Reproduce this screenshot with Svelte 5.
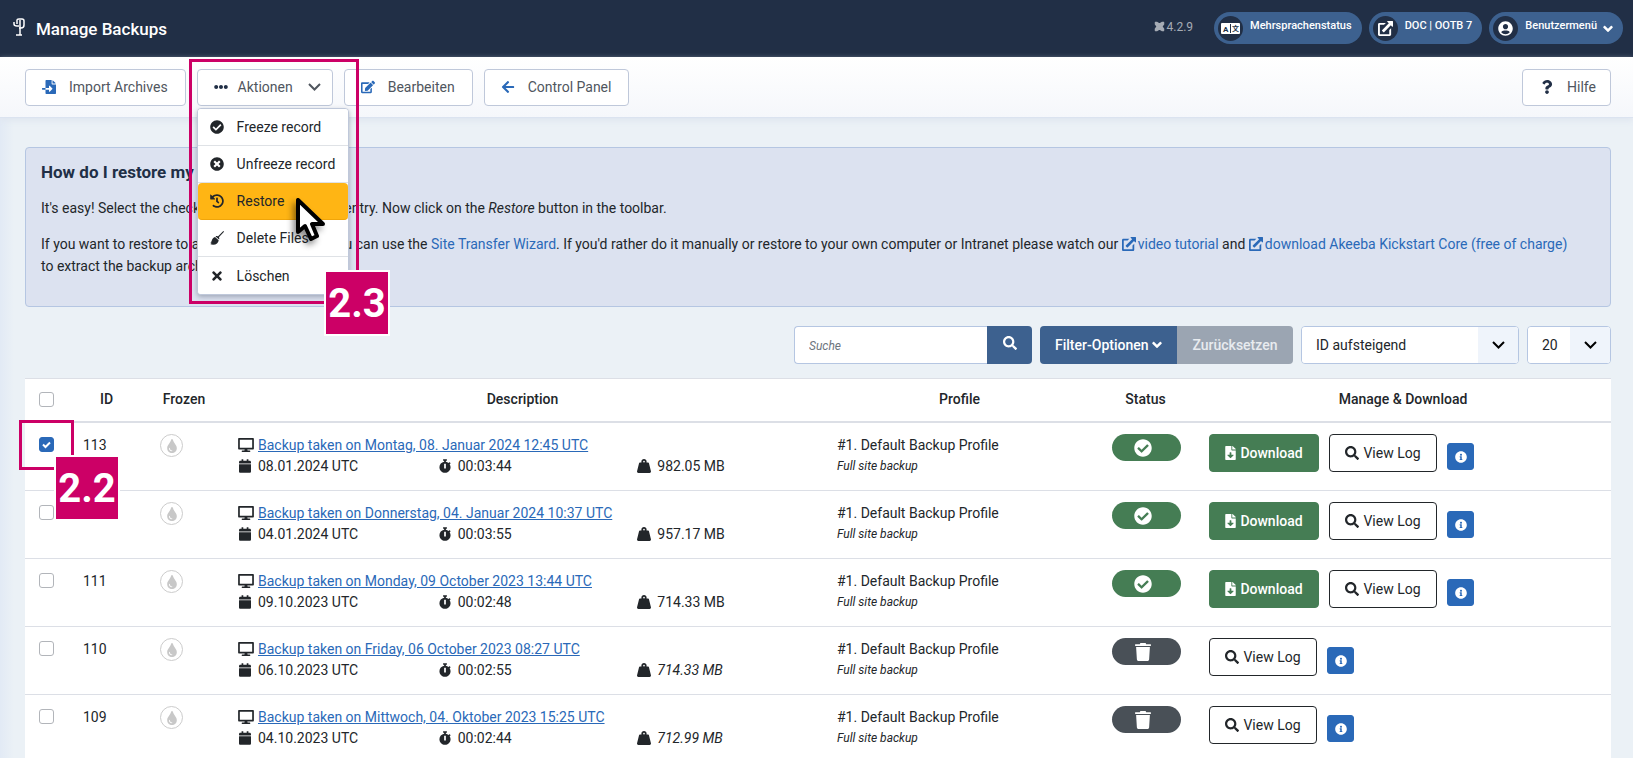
<script>
  // FontAwesome outlines, keyed by name: [viewBox width, path]
  const icons = {
    check: [512, 'M504 256c0 136.967-111.033 248-248 248S8 392.967 8 256 119.033 8 256 8s248 111.033 248 248zM227.314 387.314l184-184c6.248-6.248 6.248-16.379 0-22.627l-22.627-22.627c-6.248-6.249-16.379-6.249-22.628 0L216 308.118l-70.059-70.059c-6.248-6.248-16.379-6.248-22.628 0l-22.627 22.627c-6.248 6.248-6.248 16.379 0 22.627l104 104c6.249 6.249 16.379 6.249 22.628.001z'],
    timesCircle: [512, 'M256 8C119 8 8 119 8 256s111 248 248 248 248-111 248-248S393 8 256 8zm121.6 313.1c4.7 4.7 4.7 12.3 0 17L338 377.6c-4.7 4.7-12.3 4.7-17 0L256 312l-65.1 65.6c-4.7 4.7-12.3 4.7-17 0L134.4 338c-4.7-4.7-4.7-12.3 0-17l65.6-65-65.6-65.1c-4.7-4.7-4.7-12.3 0-17l39.6-39.6c4.7-4.7 12.3-4.7 17 0l65 65.7 65.1-65.6c4.7-4.7 12.3-4.7 17 0l39.6 39.6c4.7 4.7 4.7 12.3 0 17L312 256l65.6 65.1z'],
    history: [512, 'M504 255.531c.253 136.64-111.18 248.372-247.82 248.468-59.015.042-113.223-20.53-155.822-54.911-11.077-8.94-11.905-25.541-1.839-35.607l11.267-11.267c8.609-8.609 22.353-9.551 31.891-1.984C173.062 425.135 212.781 440 256 440c101.705 0 184-82.311 184-184 0-101.705-82.311-184-184-184-48.814 0-93.149 18.969-126.068 49.932l50.754 50.754c10.08 10.08 2.941 27.314-11.313 27.314H24c-8.837 0-16-7.163-16-16V38.627c0-14.254 17.234-21.393 27.314-11.314l49.372 49.372C129.209 34.136 189.552 8 256 8c136.81 0 247.747 110.78 248 247.531zm-180.912 78.784l9.823-12.63c8.138-10.463 6.253-25.542-4.21-33.679L288 256.349V152c0-13.255-10.745-24-24-24h-16c-13.255 0-24 10.745-24 24v135.651l65.409 50.874c10.463 8.137 25.541 6.253 33.679-4.21z'],
    brush: [512, 'M500 6c8 8 12 20 4 29L324 232c22 30 22 56 8 82l-128-112c28-22 58-18 84-4L478 6c7-6 15-6 22 0zM184 220l134 118c-10 100-90 168-206 166-40 0-76-10-104-26 30-8 46-24 52-44-16 6-32 8-46 4 60-30 40-190 170-218z'],
    times: [352, 'M242.72 256l100.07-100.07c12.28-12.28 12.28-32.19 0-44.48l-22.24-22.24c-12.28-12.28-32.19-12.28-44.48 0L176 189.28 75.93 89.21c-12.28-12.28-32.19-12.28-44.48 0L9.21 111.45c-12.28 12.28-12.28 32.19 0 44.48L109.28 256 9.21 356.07c-12.28 12.28-12.28 32.19 0 44.48l22.24 22.24c12.28 12.28 32.2 12.28 44.48 0L176 322.72l100.07 100.07c12.28 12.28 32.2 12.28 44.48 0l22.24-22.24c12.28-12.28 12.28-32.19 0-44.48L242.72 256z'],
    search: [512, 'M505 442.7L405.3 343c-4.5-4.5-10.6-7-17-7H372c27.6-35.3 44-79.7 44-128C416 93.1 322.9 0 208 0S0 93.1 0 208s93.1 208 208 208c48.3 0 92.7-16.4 128-44v16.3c0 6.4 2.5 12.5 7 17l99.7 99.7c9.4 9.4 24.6 9.4 33.9 0l28.3-28.3c9.4-9.4 9.4-24.6.1-34zM208 336c-70.7 0-128-57.2-128-128 0-70.7 57.2-128 128-128 70.7 0 128 57.2 128 128 0 70.7-57.2 128-128 128z'],
    info: [512, 'M256 8C119.043 8 8 119.083 8 256c0 136.997 111.043 248 248 248s248-111.003 248-248C504 119.083 392.957 8 256 8zm0 110c23.196 0 42 18.804 42 42s-18.804 42-42 42-42-18.804-42-42 18.804-42 42-42zm56 254c0 6.627-5.373 12-12 12h-88c-6.627 0-12-5.373-12-12v-24c0-6.627 5.373-12 12-12h12v-64h-12c-6.627 0-12-5.373-12-12v-24c0-6.627 5.373-12 12-12h64c6.627 0 12 5.373 12 12v100h12c6.627 0 12 5.373 12 12v24z'],
    dots: [512, 'M328 256c0 39.8-32.2 72-72 72s-72-32.2-72-72 32.2-72 72-72 72 32.2 72 72zm104-72c-39.8 0-72 32.2-72 72s32.2 72 72 72 72-32.2 72-72-32.2-72-72-72zm-352 0c-39.8 0-72 32.2-72 72s32.2 72 72 72 72-32.2 72-72-32.2-72-72-72z'],
    tint: [352, 'M205.22 22.09c-7.94-28.78-49.44-30.12-58.44 0C100.01 179.85 0 222.72 0 333.91 0 432.35 78.72 512 176 512s176-79.65 176-178.09c0-111.75-99.79-153.34-146.78-311.82zM176 448c-61.75 0-112-50.25-112-112 0-8.84 7.16-16 16-16s16 7.16 16 16c0 44.11 35.89 80 80 80 8.84 0 16 7.16 16 16s-7.16 16-16 16z'],
    edit: [576, 'M402.6 83.2l90.2 90.2c3.8 3.8 3.8 10 0 13.8L274.4 405.6l-92.8 10.3c-12.4 1.4-22.9-9.1-21.5-21.5l10.3-92.8L388.8 83.2c3.8-3.8 10-3.8 13.8 0zm162-22.9l-48.8-48.8c-15.2-15.2-39.9-15.2-55.2 0l-35.4 35.4c-3.8 3.8-3.8 10 0 13.8l90.2 90.2c3.8 3.8 10 3.8 13.8 0l35.4-35.4c15.2-15.3 15.2-40 0-55.2zM384 346.2V448H64V128h229.8c3.2 0 6.2-1.3 8.5-3.5l40-40c7.6-7.6 2.2-20.5-8.5-20.5H48C21.5 64 0 85.5 0 112v352c0 26.5 21.5 48 48 48h352c26.5 0 48-21.5 48-48V306.2c0-10.7-12.9-16-20.5-8.5l-40 40c-2.2 2.3-3.5 5.3-3.5 8.5z'],
    left: [448, 'M257.5 445.1l-22.2 22.2c-9.4 9.4-24.6 9.4-33.9 0L7 273c-9.4-9.4-9.4-24.6 0-33.9L201.4 44.7c9.4-9.4 24.6-9.4 33.9 0l22.2 22.2c9.5 9.5 9.3 25-.4 34.3L136.6 216H424c13.3 0 24 10.7 24 24v32c0 13.3-10.7 24-24 24H136.6l120.5 114.8c9.8 9.3 10 24.8.4 34.3z'],
    external: [512, 'M330 0h166c9 0 16 7 16 16v166c0 15-18 22-28 12l-46-46-232 232c-6 6-16 6-22 0l-46-46c-6-6-6-16 0-22L370 80l-52-52c-10-10-3-28 12-28zM48 64h220l-64 64H64v320h320V310l64-64v218c0 27-21 48-48 48H48c-27 0-48-21-48-48V112c0-27 21-48 48-48z'],
    user: [496, 'M248 8C111 8 0 119 0 256s111 248 248 248 248-111 248-248S385 8 248 8zm0 96c48.6 0 88 39.4 88 88s-39.4 88-88 88-88-39.4-88-88 39.4-88 88-88zm0 344c-58.7 0-111.3-26.6-146.5-68.2 18.8-35.4 55.6-59.8 98.5-59.8 2.4 0 4.8.4 7.1 1.1 13 4.2 26.6 6.9 40.9 6.9 14.3 0 28-2.7 40.9-6.9 2.3-.7 4.7-1.1 7.1-1.1 42.9 0 79.7 24.4 98.5 59.8C359.3 421.4 306.7 448 248 448z'],
    down: [448, 'M200 410L10 220c-14-14-14-36 0-50l34-34c14-14 36-14 50 0l130 130 130-130c14-14 36-14 50 0l34 34c14 14 14 36 0 50L248 410c-14 14-34 14-48 0z'],
    calendar: [448, 'M12 192h424c6.6 0 12 5.4 12 12v260c0 26.5-21.5 48-48 48H48c-26.5 0-48-21.5-48-48V204c0-6.6 5.4-12 12-12zm436-44v-36c0-26.5-21.5-48-48-48h-48V12c0-6.6-5.4-12-12-12h-40c-6.6 0-12 5.4-12 12v52H160V12c0-6.6-5.4-12-12-12h-40c-6.6 0-12 5.4-12 12v52H48C21.5 64 0 85.5 0 112v36c0 6.6 5.4 12 12 12h424c6.6 0 12-5.4 12-12z'],
    desktop: [576, 'M540 0H36C16 0 0 16 0 36v344c0 20 16 36 36 36h204l-10 42h-76c-14 0-26 12-26 27s12 27 26 27h268c14 0 26-12 26-27s-12-27-26-27h-76l-10-42h204c20 0 36-16 36-36V36c0-20-16-36-36-36zm-26 352H62V60h452v292z'],
    stopwatch: [448, 'M432 304c0 114.900-93.100 208-208 208S16 418.900 16 304c0-104 76.300-190.200 176-205.500V64h-28c-6.600 0-12-5.400-12-12V12c0-6.600 5.400-12 12-12h120c6.600 0 12 5.400 12 12v40c0 6.600-5.400 12-12 12h-28v34.500c37.500 5.800 71.700 21.600 99.700 44.600l27.500-27.500c4.700-4.700 12.300-4.700 17 0l28.300 28.300c4.700 4.700 4.700 12.300 0 17l-30 30C419.700 223.300 432 262.200 432 304zm-176 36V188.500c0-6.600-5.400-12-12-12h-40c-6.600 0-12 5.400-12 12V340c0 6.600 5.400 12 12 12h40c6.600 0 12-5.400 12-12z'],
    weight: [512, 'M510.280 445.860l-73.030-292.130c-3.800-15.190-16.440-25.720-30.870-25.720h-60.250c3.570-10.050 5.880-20.720 5.880-32 0-53.020-42.980-96-96-96s-96 42.980-96 96c0 11.280 2.300 21.950 5.880 32h-60.250c-14.430 0-27.080 10.540-30.870 25.720L1.720 445.860C-6.610 479.170 16.380 512 48.030 512h415.950c31.640 0 54.630-32.830 46.300-66.140zM256 128c-17.640 0-32-14.360-32-32s14.360-32 32-32 32 14.360 32 32-14.360 32-32 32z'],
    question: [384, 'M202.021 0C122.202 0 70.503 32.703 29.914 91.026c-7.363 10.58-5.093 25.086 5.178 32.874l43.138 32.709c10.373 7.865 25.132 6.026 33.253-4.148 25.049-31.381 43.63-49.449 82.757-49.449 30.764 0 68.816 19.799 68.816 49.631 0 22.552-18.617 34.134-48.993 51.164-35.423 19.86-82.299 44.576-82.299 106.405V320c0 13.255 10.745 24 24 24h72.471c13.255 0 24-10.745 24-24v-5.773c0-42.86 125.268-44.645 125.268-160.627C377.504 66.256 286.902 0 202.021 0zM192 373.459c-38.196 0-69.271 31.075-69.271 69.271 0 38.195 31.075 69.27 69.271 69.27s69.271-31.075 69.271-69.271-31.075-69.27-69.271-69.27z'],
    import: [512, 'M16 288c-9 0-16 7-16 16v32c0 9 7 16 16 16h112v-64H16zM489 105L407 23c-4-4-11-7-17-7h-6v112h112v-6c0-6-3-13-7-17zM352 136V0H152c-13 0-24 11-24 24v264h128v-65c0-14 17-21 27-11l96 97c7 6 7 17 0 23l-96 97c-10 10-27 3-27-11v-66H128v136c0 13 11 24 24 24h336c13 0 24-11 24-24V160H376c-13 0-24-11-24-24z'],
    file: [384, 'M224 136V0H24C11 0 0 11 0 24v464c0 13 11 24 24 24h336c13 0 24-11 24-24V160H248c-13 0-24-11-24-24zm76 211L203 443c-6 7-17 7-23 0l-96-96c-10-10-3-27 11-27h65v-80c0-9 7-16 16-16h32c9 0 16 7 16 16v80h65c14 0 21 17 11 27zM377 105L279 7c-4-4-11-7-17-7h-6v128h128v-6c0-6-3-13-7-17z'],
    trash: [448, 'M150 0h148l16 32h122c7 0 12 5 12 12v40H0V44c0-7 5-12 12-12h122zM28 112h392l-22 356c-2 25-22 44-48 44H98c-26 0-46-19-48-44z']
  };

  let menuOpen = true;
  let search = '';

  const actions = [
    { icon: 'check', label: 'Freeze record' },
    { icon: 'timesCircle', label: 'Unfreeze record' },
    { icon: 'history', label: 'Restore', active: true },
    { icon: 'brush', label: 'Delete Files' },
    { icon: 'times', label: 'Löschen' }
  ];

  let backups = [
    { id: 113, title: 'Backup taken on Montag, 08. Januar 2024 12:45 UTC', date: '08.01.2024 UTC', time: '00:03:44', size: '982.05 MB', stored: true, checked: true },
    { id: 112, title: 'Backup taken on Donnerstag, 04. Januar 2024 10:37 UTC', date: '04.01.2024 UTC', time: '00:03:55', size: '957.17 MB', stored: true, checked: false },
    { id: 111, title: 'Backup taken on Monday, 09 October 2023 13:44 UTC', date: '09.10.2023 UTC', time: '00:02:48', size: '714.33 MB', stored: true, checked: false },
    { id: 110, title: 'Backup taken on Friday, 06 October 2023 08:27 UTC', date: '06.10.2023 UTC', time: '00:02:55', size: '714.33 MB', stored: false, checked: false },
    { id: 109, title: 'Backup taken on Mittwoch, 04. Oktober 2023 15:25 UTC', date: '04.10.2023 UTC', time: '00:02:44', size: '712.99 MB', stored: false, checked: false }
  ];

  function toggleAll(event) {
    backups = backups.map(backup => ({ ...backup, checked: event.target.checked }));
  }
</script>

{#snippet icon(name, size = 14)}
  <svg class="icon" height={size} width={Math.round((size * icons[name][0]) / 512)} viewBox="0 0 {icons[name][0]} 512" aria-hidden="true"><path d={icons[name][1]} /></svg>
{/snippet}

<div class="page">
  <header>
    <svg class="logo" width="12" height="18" viewBox="0 0 12 18" aria-hidden="true">
      <path d="M1 4v2q0 2 3 2h2M4 6V2q0-1 2-1h3q2 0 2 2v4q0 3-3 3H6M7 2v15M3 17h6" />
    </svg>
    <h1>Manage Backups</h1>
    <div class="status-bar">
      <span class="version">
        <svg width="11" height="11" viewBox="0 0 10 10" aria-hidden="true"><path d="M1 1l8 8M9 1L1 9M2 1l3 2 3-2M2 9l3-2 3 2M1 2l2 3-2 3M9 2L7 5l2 3" /></svg>
        4.2.9
      </span>
      <a class="pill" href="#sprachen">
        <span class="disc">
          <svg width="19" height="11" viewBox="0 0 19 11" aria-hidden="true">
            <rect width="19" height="11" rx="1" fill="#fff" />
            <path d="M9.500 1v9" stroke="#212f46" />
            <text x="2" y="9" font-size="8" font-weight="700" fill="#212f46">A</text>
            <text x="11" y="8" font-size="7" font-weight="700" fill="#212f46">文</text>
          </svg>
        </span>
        <span class="pill-text">Mehrsprachenstatus</span>
      </a>
      <a class="pill" href="#site">
        <span class="disc">{@render icon('external', 15)}</span>
        <span class="pill-text">DOC | OOTB 7</span>
      </a>
      <button class="pill" type="button">
        <span class="disc">{@render icon('user', 15)}</span>
        <span class="pill-text">Benutzermenü</span>
        {@render icon('down', 11)}
      </button>
    </div>
  </header>

  <div class="toolbar">
    <button class="tool" type="button">{@render icon('import')}Import Archives</button>
    <div class="dropdown">
      <button class="tool dark" type="button" aria-expanded={menuOpen} on:click={() => (menuOpen = !menuOpen)}>
        {@render icon('dots')}Aktionen
        <svg class="caret" width="13" height="8" viewBox="0 0 13 8" aria-hidden="true"><path d="M1 1l5.500 5.500L12 1" /></svg>
      </button>
      {#if menuOpen}
        <div class="menu">
          {#each actions as action}
            <button class="menu-item" class:active={action.active} type="button">
              <span class="menu-icon">{@render icon(action.icon)}</span>{action.label}
            </button>
          {/each}
        </div>
      {/if}
    </div>
    <button class="tool" type="button">{@render icon('edit')}Bearbeiten</button>
    <button class="tool" type="button">{@render icon('left')}Control Panel</button>
    <button class="tool dark help" type="button">{@render icon('question')}Hilfe</button>
  </div>

  <main>
    <section class="alert">
      <h2>How do I restore my backups?</h2>
      <p>It's easy! Select the checkbox next to the backup entry. Now click on the <em>Restore</em> button in the toolbar.</p>
      <p>
        If you want to restore to a different web server you can use the <a href="#wizard">Site Transfer Wizard</a>. If you'd rather do it manually or restore to your own computer or Intranet please watch our
        <a href="#video">{@render icon('external')}video tutorial</a> and
        <a href="#kickstart">{@render icon('external')}download Akeeba Kickstart Core (free of charge)</a>
        to&nbsp;extract the backup archive.
      </p>
    </section>

    <form class="filters">
      <div class="group">
        <input class="search" type="text" placeholder="Suche" aria-label="Suche" bind:value={search} />
        <button class="search-btn" type="button" aria-label="Suchen">{@render icon('search')}</button>
      </div>
      <div class="group">
        <button class="filter-btn" type="button">Filter-Optionen {@render icon('down', 11)}</button>
        <button class="clear-btn" type="button">Zurücksetzen</button>
      </div>
      <div class="select">
        <select class="order" aria-label="Sortierung">
          <option>ID aufsteigend</option>
          <option>ID absteigend</option>
        </select>
        <span class="arrow"><svg class="caret" width="13" height="8" viewBox="0 0 13 8" aria-hidden="true"><path d="M1 1l5.500 5.500L12 1" /></svg></span>
      </div>
      <div class="select">
        <select class="limit" aria-label="Anzahl">
          <option>20</option>
          <option>50</option>
        </select>
        <span class="arrow"><svg class="caret" width="13" height="8" viewBox="0 0 13 8" aria-hidden="true"><path d="M1 1l5.500 5.500L12 1" /></svg></span>
      </div>
    </form>

    <table>
      <thead>
        <tr>
          <th class="c-check"><input type="checkbox" aria-label="Alle auswählen" on:change={toggleAll} /></th>
          <th class="c-id">ID</th>
          <th class="c-frozen">Frozen</th>
          <th>Description</th>
          <th class="c-profile">Profile</th>
          <th class="c-status">Status</th>
          <th class="c-manage">Manage &amp; Download</th>
        </tr>
      </thead>
      <tbody>
        {#each backups as backup}
          <tr>
            <td class="c-check"><input type="checkbox" aria-label="Backup {backup.id}" bind:checked={backup.checked} /></td>
            <td>{backup.id}</td>
            <td><span class="frozen">{@render icon('tint')}</span></td>
            <td class="desc">
              <div class="line">
                <span class="slot">{@render icon('desktop')}</span>
                <a href="#backup-{backup.id}">{backup.title}</a>
              </div>
              <div class="meta">
                <div class="line"><span class="slot small">{@render icon('calendar')}</span>{backup.date}</div>
                <div class="line"><span class="slot small">{@render icon('stopwatch')}</span>{backup.time}</div>
                <div class="line"><span class="slot small">{@render icon('weight')}</span><span class:gone={!backup.stored}>{backup.size}</span></div>
              </div>
            </td>
            <td>
              <div class="line">#1. Default Backup Profile</div>
              <div class="line type">Full site backup</div>
            </td>
            <td>
              <span class="badge" class:obsolete={!backup.stored}>{@render icon(backup.stored ? 'check' : 'trash', 18)}</span>
            </td>
            <td>
              <div class="buttons">
                {#if backup.stored}
                  <button class="download" type="button">{@render icon('file')}Download</button>
                {/if}
                <button class="log" type="button">{@render icon('search')}View Log</button>
                <button class="info" type="button" aria-label="Info">{@render icon('info', 12)}</button>
              </div>
            </td>
          </tr>
        {/each}
      </tbody>
    </table>
  </main>

  <!-- step markers of the guide, laid over the page -->
  <div class="frame frame-menu"></div>
  <div class="frame frame-check"></div>
  <div class="step step-menu">2.3</div>
  <div class="step step-check">2.2</div>
  <svg class="cursor" width="40" height="54" viewBox="0 0 40 54" aria-hidden="true">
    <path d="M10 6v32l7-6 6 13 6-3-5-12h11z" />
  </svg>
</div>

<style>
  :global(body) {
    margin: 0;
    overflow: hidden;
  }

  .page {
    position: relative;
    min-height: 100vh;
    background: linear-gradient(90deg, #e2eaf5, #ebf1f6 14px);
    color: #22262a;
    font-family: Roboto, 'Noto Sans CJK SC', sans-serif;
    font-size: 14px;
    line-height: 22px;
  }

  button, input, select {
    font: inherit;
    color: inherit;
    margin: 0;
    box-sizing: border-box;
  }

  button {
    cursor: pointer;
  }

  .icon {
    fill: currentColor;
    flex: none;
  }

  .caret {
    fill: none;
    stroke: currentColor;
    stroke-width: 2;
  }

  a {
    color: #2a69b8;
    text-decoration: none;
  }

  header {
    display: flex;
    align-items: center;
    height: 57px;
    padding: 0 10px 0 13px;
    background: #212f46;
    color: #fff;
    box-sizing: border-box;
  }

  .logo {
    fill: none;
    stroke: #fff;
    stroke-width: 1.500;
    margin: 0 11px 4px 0;
  }

  h1 {
    margin: 0;
    font-size: 17px;
    font-weight: 500;
  }

  .status-bar {
    display: flex;
    align-items: center;
    gap: 7px;
    margin-left: auto;
    padding-bottom: 1px;
    font-size: 11px;
  }

  .version {
    display: flex;
    align-items: center;
    gap: 2px;
    margin-right: 14px;
    padding-bottom: 3px;
    color: #a6acb5;
    font-size: 12px;
  }

  .version svg {
    fill: none;
    stroke: #a6acb5;
    stroke-width: 1.500;
  }

  .pill {
    display: flex;
    align-items: center;
    height: 32px;
    padding: 0 10px 0 4px;
    border: 0;
    border-radius: 16px;
    background: #3d618f;
    color: #fff;
    font-weight: 500;
  }

  .pill-text {
    padding-bottom: 4px;
  }

  .pill .icon {
    margin-left: 6px;
  }

  .pill .disc .icon {
    margin: 0;
  }

  .disc {
    display: flex;
    align-items: center;
    justify-content: center;
    width: 25px;
    height: 25px;
    margin-right: 7px;
    border-radius: 50%;
    background: #212f46;
  }

  .toolbar {
    display: flex;
    gap: 11px;
    padding: 12px 22px 11px 25px;
    border-bottom: 1px solid #dbe3f0;
    background: linear-gradient(#fff, #f5f7fb);
    box-shadow: 0 3px 6px #dfe6f0;
  }

  .tool {
    display: flex;
    align-items: center;
    gap: 13px;
    height: 37px;
    padding: 0 17px 2px 16px;
    border: 1px solid #bfc8da;
    border-radius: 4px;
    background: #fff;
    color: #50565e;
  }

  .tool .icon {
    color: #2a69b8;
    width: 14px;
  }

  .dark .icon {
    color: #212f46;
  }

  .dark {
    padding: 0 11px 2px 16px;
    gap: 10px;
  }

  .help {
    margin-left: auto;
    padding: 0 14px 2px 17px;
    gap: 13px;
  }

  .tool .caret {
    margin-left: 5px;
  }

  .dropdown {
    position: relative;
  }

  .menu {
    position: absolute;
    z-index: 1;
    top: 39px;
    left: 0;
    width: 152px;
    border: 1px solid #bfc8da;
    border-radius: 4px;
    background: #fff;
    box-shadow: 0 2px 5px rgba(50, 60, 80, 0.35);
    overflow: hidden;
    box-sizing: border-box;
  }

  .menu-item {
    display: flex;
    align-items: center;
    gap: 11px;
    width: 100%;
    height: 37px;
    padding: 0 0 0 10px;
    border: 0;
    border-bottom: 1px solid #dfe2e6;
    background: #fff;
    white-space: nowrap;
  }

  .menu-item:last-child {
    border-bottom: 0;
  }

  .menu-item.active {
    border-color: #f0a50a;
    border-radius: 4px;
    background: #ffb514;
  }

  .menu-icon {
    display: flex;
    justify-content: center;
    width: 18px;
  }

  main {
    padding: 29px 22px 0 25px;
  }

  .alert {
    min-height: 160px;
    padding: 13px 15px;
    border: 1px solid #b5c6e2;
    border-radius: 4px;
    background: #dce2f0;
    box-sizing: border-box;
  }

  h2 {
    margin: 0 0 14px;
    font-size: 17px;
    line-height: 22px;
    font-weight: 700;
    color: #212f46;
  }

  .alert p {
    margin: 0 0 14px;
  }

  .alert .icon {
    margin-right: 2px;
    vertical-align: -2px;
  }

  .filters {
    display: flex;
    justify-content: flex-end;
    gap: 8px;
    margin: 19px 0 14px;
  }

  .group {
    display: flex;
  }

  .filters button {
    height: 38px;
    border: 0;
    background: #3d618f;
    color: #fff;
    font-weight: 500;
  }

  .search {
    width: 193px;
    height: 38px;
    padding: 0 14px;
    border: 1px solid #b5c6e2;
    border-right: 0;
    border-radius: 4px 0 0 4px;
    background: #fff;
  }

  .search::placeholder {
    color: #6d757e;
    font-size: 12px;
    font-style: italic;
  }

  .search-btn {
    width: 45px;
    border-radius: 0 4px 4px 0;
  }

  .filter-btn {
    width: 137px;
    padding: 0;
    border-radius: 4px 0 0 4px;
  }

  .filters .clear-btn {
    width: 116px;
    padding: 0;
    border-radius: 0 4px 4px 0;
    background: #9ba5b2;
    color: #e8ebef;
  }

  .select {
    display: grid;
    border: 1px solid #b5c6e2;
    border-radius: 4px;
    background: #fff;
    overflow: hidden;
  }

  .select select, .arrow {
    grid-area: 1 / 1;
  }

  .select select {
    appearance: none;
    height: 36px;
    padding: 0 14px;
    border: 0;
    background: #fff;
  }

  .order {
    width: 216px;
  }

  .limit {
    width: 82px;
  }

  .arrow {
    display: flex;
    align-items: center;
    justify-content: center;
    justify-self: end;
    width: 40px;
    background: #eff4fb;
    color: #000;
    pointer-events: none;
  }

  table {
    width: 100%;
    border-collapse: separate;
    border-spacing: 0;
    table-layout: fixed;
    border-top: 1px solid #dcdfe6;
    background: #fff;
  }

  th {
    height: 40px;
    padding: 0 15px 2px 17px;
    border-bottom: 2px solid #dcdfe6;
    font-weight: 500;
    box-sizing: content-box;
  }

  td {
    height: 56px;
    padding: 11px 16px 0;
    border-bottom: 1px solid #dcdfe6;
    vertical-align: top;
    box-sizing: content-box;
  }

  th.c-check, td.c-check {
    width: 16px;
    padding-left: 14px;
    padding-right: 12px;
    text-align: left;
  }

  .c-id {
    width: 45px;
  }

  .c-frozen {
    width: 46px;
  }

  .c-profile {
    width: 243px;
  }

  .c-status {
    width: 65px;
  }

  .c-manage {
    width: 386px;
  }

  input[type='checkbox'] {
    appearance: none;
    display: block;
    width: 15px;
    height: 15px;
    border: 1px solid #b2b5ba;
    border-radius: 3px;
    background: #fff;
  }

  td input[type='checkbox'] {
    margin-top: 3px;
  }

  input[type='checkbox']:checked {
    border-color: #2a69b8;
    background: #2a69b8 url("data:image/svg+xml,%3Csvg xmlns='http://www.w3.org/2000/svg' viewBox='0 0 13 13'%3E%3Cpath d='M3 6.500l2.500 2.500L10 4.500' fill='none' stroke='white' stroke-width='2'/%3E%3C/svg%3E") center / 13px no-repeat;
  }

  .frozen {
    display: flex;
    align-items: center;
    justify-content: center;
    width: 23px;
    height: 23px;
    border: 1px solid #ccc;
    border-radius: 50%;
    color: #c8c8c8;
    box-sizing: border-box;
  }

  .line {
    display: flex;
    align-items: center;
    height: 21px;
    white-space: nowrap;
  }

  .slot {
    display: flex;
    justify-content: center;
    width: 16px;
    margin-right: 4px;
  }

  .slot.small {
    width: 14px;
    margin-right: 6px;
  }

  .desc a {
    text-decoration: underline;
  }

  .meta {
    display: grid;
    grid-template-columns: repeat(3, 1fr);
    margin-right: -32px;
  }

  .gone {
    font-style: italic;
  }

  .type {
    font-size: 12px;
    font-style: italic;
  }

  .badge {
    display: flex;
    align-items: center;
    justify-content: center;
    width: 69px;
    height: 27px;
    padding-right: 7px;
    border-radius: 14px;
    background: #457d54;
    color: #fff;
    box-sizing: border-box;
  }

  .badge.obsolete {
    background: #495057;
  }

  .buttons {
    display: flex;
    gap: 10px;
  }

  .buttons button {
    display: flex;
    align-items: center;
    justify-content: center;
    gap: 4px;
    height: 38px;
    padding: 0;
    border: 1px solid #22262a;
    border-radius: 4px;
    background: #fff;
  }

  .buttons .download {
    width: 110px;
    border-color: #457d54;
    background: #457d54;
    color: #fff;
    font-weight: 500;
  }

  .buttons .log {
    width: 108px;
  }

  .buttons .info {
    width: 27px;
    height: 27px;
    margin-top: 9px;
    border-color: #2a69b8;
    border-radius: 3px;
    background: #2a69b8;
    color: #fff;
  }

  .frame {
    position: absolute;
    z-index: 2;
    border: 3px solid #cc0066;
    box-sizing: border-box;
    pointer-events: none;
  }

  .frame-menu {
    left: 189px;
    top: 59px;
    width: 170px;
    height: 245px;
  }

  .frame-check {
    left: 19px;
    top: 420px;
    width: 55px;
    height: 50px;
  }

  .step {
    position: absolute;
    z-index: 3;
    width: 62px;
    height: 62px;
    border: 2px solid #fff;
    background: #cc0066;
    color: #fff;
    font-size: 40px;
    font-weight: 700;
    line-height: 64px;
    text-align: center;
  }

  .step-menu {
    left: 324px;
    top: 270px;
  }

  .step-check {
    left: 54px;
    top: 455px;
  }

  .cursor {
    position: absolute;
    z-index: 3;
    left: 288px;
    top: 194px;
    fill: #fff;
    stroke: #000;
    stroke-width: 4;
    stroke-linejoin: round;
    filter: drop-shadow(-3px 4px 3px rgba(0, 0, 0, 0.45));
    pointer-events: none;
    overflow: visible;
  }
</style>
